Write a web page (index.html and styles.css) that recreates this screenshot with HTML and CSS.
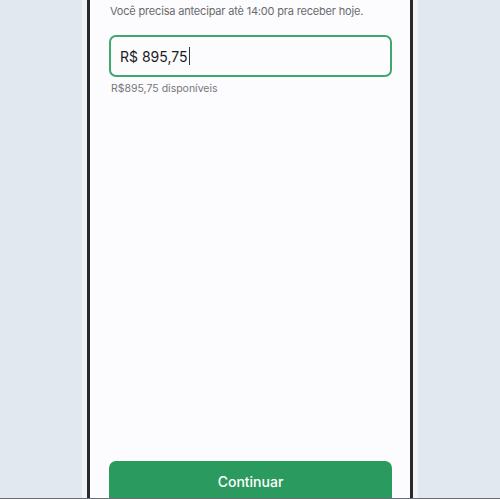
FILE: index.html
```html
<!doctype html>
<html>

<head>
    <meta charset="utf-8">
    <title>Antecipar</title>
    <link rel="stylesheet" href="styles.css">
</head>

<body>
<div class="viewport">
    <div class="shell">
        <div class="frame">
            <div class="screen">
                <p class="notice">Você precisa antecipar atè 14:00 pra receber hoje.</p>
                <div class="field"><span class="value">R$ 895,75</span><span class="caret"></span></div>
                <p class="hint">R$895,75 disponíveis</p>
                <div class="spacer"></div>
                <div class="btn">Continuar</div>
            </div>
        </div>
    </div>
</div>
</body>

</html>
```

FILE: styles.css
```css
* {
    padding: 0;
    margin: 0;
    box-sizing: border-box;
}

body {
    background: #e2e8f0;
    font-family: Inter, "Noto Sans", sans-serif;
}

.viewport {
    height: 499px;
    overflow: hidden;
    border-bottom: 1px solid #6b6f75;
}

.shell {
    width: 336px;
    margin: 0 auto;
    padding: 0 5px;
    background: #f1f3f6;
}

.frame {
    border: 3px solid #2a2a2c;
    border-top: none;
    border-bottom: none;
}

.screen {
    height: 508px;
    background: #fcfbfd;
    padding: 0 18px 0 19px;
    display: flex;
    flex-direction: column;
}

.notice {
    padding: 1px 0 0 1px;
    font-size: 11px;
    letter-spacing: -0.18px;
    line-height: 20px;
    color: #6a6a6e;
}

.field {
    margin-top: 14px;
    height: 42px;
    border: 2px solid #3ea86e;
    border-radius: 7px;
    padding-left: 9px;
    display: flex;
    align-items: center;
    font-size: 14px;
    color: #1c1c1e;
}

.caret {
    width: 1px;
    height: 18px;
    background: #333;
    margin-left: 1px;
}

.hint {
    margin-top: 4px;
    padding-left: 2px;
    font-size: 10.5px;
    line-height: 16px;
    color: #77777b;
}

.spacer {
    flex: 1;
}

.btn {
    flex-shrink: 0;
    height: 47px;
    padding-top: 11px;
    border-radius: 7px 7px 0 0;
    background: #2b9a5f;
    color: #fff;
    font-size: 14px;
    font-weight: 500;
    line-height: 20px;
    text-align: center;
}
```
